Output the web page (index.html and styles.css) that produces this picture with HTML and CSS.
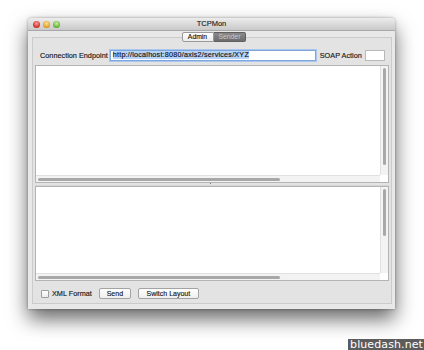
FILE: index.html
```html
<!DOCTYPE html>
<html>
<head>
<meta charset="utf-8">
<link rel="stylesheet" href="styles.css">
</head>
<body>
<div class="window">
  <div class="titlebar">
    <div class="lights">
      <span class="light red"></span>
      <span class="light yellow"></span>
      <span class="light green"></span>
    </div>
    <div class="title">TCPMon</div>
  </div>
  <div class="body">
    <div class="tabs">
      <span class="tab">Admin</span>
      <span class="tab active">Sender</span>
    </div>
    <div class="panel">
      <div class="endpoint-row">
        <span class="label">Connection Endpoint</span>
        <span class="field url"><span class="sel">http://localhost:8080/axis2/services/XYZ</span></span>
        <span class="label soap">SOAP Action</span>
        <span class="field soap-field"></span>
      </div>
      <div class="split">
        <div class="pane upper">
          <div class="pane-main">
            <div class="text"></div>
            <div class="vscroll"><div class="vthumb t1"></div></div>
          </div>
          <div class="hscroll"><div class="hthumb"></div></div>
        </div>
        <div class="divider"><span class="dot"></span></div>
        <div class="pane lower">
          <div class="pane-main">
            <div class="text"></div>
            <div class="vscroll"><div class="vthumb t2"></div></div>
          </div>
          <div class="hscroll"><div class="hthumb"></div></div>
        </div>
      </div>
      <div class="bottom-row">
        <span class="check"></span>
        <span class="label xml">XML Format</span>
        <span class="btn send">Send</span>
        <span class="btn switch">Switch Layout</span>
      </div>
    </div>
  </div>
</div>
<div class="watermark">bluedash.net</div>
</body>
</html>
```

FILE: styles.css
```css
html, body {
  margin: 0;
  padding: 0;
  background: #ffffff;
  width: 424px;
  height: 350px;
  overflow: hidden;
  font-family: "Liberation Sans", Arial, sans-serif;
  position: relative;
}

.window {
  margin: 18px 0 0 28px;
  width: 367px;
  height: 291px;
  background: #e8e8e8;
  border-radius: 4px 4px 0 0;
  box-shadow: 0 10px 20px rgba(0, 0, 0, 0.6), 0 0 3px rgba(0, 0, 0, 0.35);
  display: flex;
  flex-direction: column;
}

.titlebar {
  height: 12px;
  background: linear-gradient(#ececec, #c9c9c9);
  border-bottom: 1px solid #a8a8a8;
  border-radius: 4px 4px 0 0;
  position: relative;
  display: flex;
  align-items: center;
}

.lights {
  display: flex;
  gap: 3px;
  margin-left: 5px;
}

.light {
  width: 7px;
  height: 7px;
  border-radius: 50%;
  display: block;
}
.light.red { background: radial-gradient(circle at 50% 35%, #f7a0a0, #d8372f 60%, #a92420); }
.light.yellow { background: radial-gradient(circle at 50% 35%, #fbe0a0, #e6a52a 60%, #b27716); }
.light.green { background: radial-gradient(circle at 50% 35%, #cdeea8, #6cbb3a 60%, #3f8a20); }

.title {
  position: absolute;
  left: 0;
  right: 0;
  top: 0;
  text-align: center;
  font-size: 7.5px;
  line-height: 12px;
  color: #1a1a1a;
  -webkit-text-stroke: 0.12px #1a1a1a;
}

.body {
  flex: 1;
  display: flex;
  flex-direction: column;
  padding: 1px 3px 5px 4px;
  position: relative;
}

.tabs {
  display: flex;
  justify-content: center;
  margin-left: 3px;
  height: 9px;
  position: relative;
  z-index: 2;
}

.tab {
  font-size: 6.8px;
  line-height: 8px;
  height: 8px;
  padding: 0 5px;
  border: 1px solid #9a9a9a;
  background: linear-gradient(#ffffff, #ececec);
  color: #111;
  -webkit-text-stroke: 0.12px #111;
  width: 20px;
  text-align: center;
  border-radius: 2px 0 0 2px;
}
.tab.active {
  background: linear-gradient(#8a8a8a, #6c6c6c);
  color: #c9c9c9;
  -webkit-text-stroke: 0;
  border-color: #5f5f5f;
  border-radius: 0 2px 2px 0;
  border-left: none;
  width: 21px;
}

.panel {
  flex: 1;
  margin-top: -4px;
  border: 1px solid #cbcbcb;
  background: #e3e3e3;
  display: flex;
  flex-direction: column;
  padding: 0 2px 0 2px;
}

.endpoint-row {
  display: flex;
  align-items: center;
  height: 12px;
  margin-top: 11px;
  padding-left: 5px;
}

.label {
  font-size: 7.3px;
  color: #1a1a1a;
  -webkit-text-stroke: 0.15px #1a1a1a;
  white-space: nowrap;
}

.field {
  height: 11px;
  background: #fff;
  box-sizing: border-box;
}

.url {
  margin-left: 2px;
  width: 206px;
  border: 1px solid #7ea6dc;
  box-shadow: 0 0 0 1px #a9c6ee;
  display: flex;
  align-items: center;
  padding-left: 2px;
}

.sel {
  background: #b6d3fb;
  font-size: 7.2px;
  line-height: 8px;
  color: #111;
  -webkit-text-stroke: 0.15px #111;
  letter-spacing: 0.22px;
}

.soap {
  margin-left: 4px;
}

.soap-field {
  margin-left: 3px;
  width: 20px;
  border: 1px solid #b9b9b9;
}

.split {
  margin-top: 4px;
  height: 216px;
  display: flex;
  flex-direction: column;
}

.pane {
  background: #fff;
  border: 1px solid #b4b4b4;
  display: flex;
  flex-direction: column;
}

.upper { height: 116px; }
.lower { flex: 1; }

.pane-main {
  flex: 1;
  display: flex;
}

.text {
  flex: 1;
}

.vscroll {
  width: 7px;
  background: #f3f3f3;
  border-left: 1px solid #e0e0e0;
  display: flex;
  justify-content: center;
  padding-top: 2px;
}

.vthumb {
  width: 3px;
  background: #a8a8a8;
  border-radius: 2px;
}
.t1 { height: 97px; }
.t2 { height: 47px; }

.hscroll {
  height: 6px;
  background: #f3f3f3;
  border-top: 1px solid #e0e0e0;
  display: flex;
  align-items: center;
  padding-left: 2px;
  margin-right: 8px;
}

.hthumb {
  width: 242px;
  height: 3px;
  background: #a8a8a8;
  border-radius: 2px;
}

.divider {
  height: 2px;
  border-bottom: 1px solid #d6d6d6;
  position: relative;
}

.dot {
  position: absolute;
  left: 175px;
  top: 0;
  width: 1px;
  height: 1px;
  background: #777;
}

.bottom-row {
  display: flex;
  align-items: center;
  margin-top: 7px;
  padding-left: 6px;
  height: 11px;
}

.check {
  width: 6px;
  height: 6px;
  border: 1px solid #9d9d9d;
  border-radius: 1px;
  background: linear-gradient(#ffffff, #ececec);
}

.xml {
  margin-left: 3px;
}

.btn {
  font-size: 7px;
  height: 9px;
  line-height: 9px;
  border: 1px solid #a3a3a3;
  border-radius: 2px;
  background: linear-gradient(#ffffff, #eeeeee);
  text-align: center;
  color: #111;
  -webkit-text-stroke: 0.12px #111;
}

.send {
  margin-left: 7px;
  width: 30px;
}

.switch {
  margin-left: 7px;
  width: 59px;
}

.watermark {
  position: absolute;
  right: 0;
  bottom: 0;
  background: #5c5c5c;
  color: #ffffff;
  font-family: "DejaVu Sans", sans-serif;
  font-size: 11px;
  line-height: 11px;
  padding: 0 1px 0 2px;
  letter-spacing: 0.1px;
}
```
